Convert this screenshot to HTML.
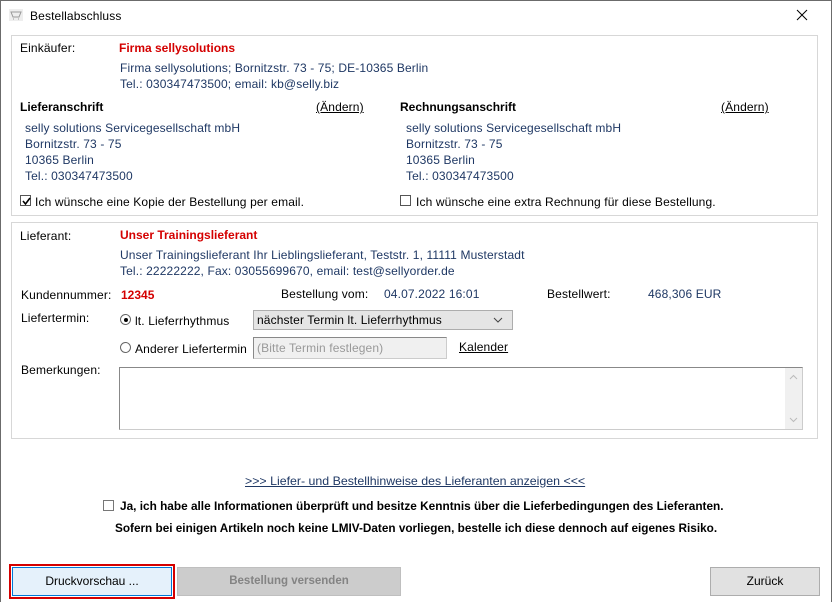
<!DOCTYPE html>
<html><head><meta charset="utf-8"><style>
*{margin:0;padding:0;box-sizing:border-box}
body{width:832px;height:602px;background:#fff;font-family:"Liberation Sans",Arial,sans-serif;font-size:12px;color:#000;position:relative;overflow:hidden;letter-spacing:.13px}
.win{position:absolute;left:0;top:0;width:832px;height:602px;border:1px solid #6b6b6b;border-bottom:none}
.a{position:absolute;white-space:nowrap}
.blue{color:#1f3864}
.red{color:#d40000;font-weight:bold;letter-spacing:0}
.b{font-weight:bold;letter-spacing:0}
.u{text-decoration:underline}
.panel{position:absolute;border:1px solid #d7d7d7;background:#fff}
.cb{position:absolute;width:11px;height:11px;border:1px solid #555;background:#fff}
.rb{position:absolute;width:11px;height:11px;border:1px solid #666;border-radius:50%;background:#fff}
.btn{position:absolute;height:28px;border:1px solid #adadad;background:#e1e1e1;text-align:center;line-height:26px;letter-spacing:0}
</style></head><body>
<div class="win"></div>
<svg class="a" style="left:9px;top:9px" width="14" height="12" viewBox="0 0 14 12"><rect x="0" y="0" width="14" height="12" fill="#eee"/><path d="M2 3h10l-2 5H4z M4 10h1 M9 10h1" stroke="#999" fill="none"/></svg>
<div class="a" style="left:30px;top:9px">Bestellabschluss</div>
<svg class="a" style="left:796px;top:9px" width="12" height="12"><path d="M1 1L11 11M11 1L1 11" stroke="#000" stroke-width="1"/></svg>

<div class="panel" style="left:11px;top:35px;width:807px;height:181px"></div>
<div class="a" style="left:20px;top:41px">Einkäufer:</div>
<div class="a red" style="left:119px;top:41px">Firma sellysolutions</div>
<div class="a blue" style="left:120px;top:61px">Firma sellysolutions; Bornitzstr. 73 - 75; DE-10365 Berlin</div>
<div class="a blue" style="left:120px;top:77px">Tel.: 030347473500; email: kb@selly.biz</div>
<div class="a b" style="left:20px;top:100px">Lieferanschrift</div>
<div class="a u" style="left:316px;top:100px">(Ändern)</div>
<div class="a blue" style="left:25px;top:120px;line-height:16px">selly solutions Servicegesellschaft mbH<br>Bornitzstr. 73 - 75<br>10365 Berlin<br>Tel.: 030347473500</div>
<div class="a b" style="left:400px;top:100px">Rechnungsanschrift</div>
<div class="a u" style="left:721px;top:100px">(Ändern)</div>
<div class="a blue" style="left:406px;top:120px;line-height:16px">selly solutions Servicegesellschaft mbH<br>Bornitzstr. 73 - 75<br>10365 Berlin<br>Tel.: 030347473500</div>
<div class="cb" style="left:20px;top:195px"></div>
<svg class="a" style="left:21px;top:196px" width="11" height="11"><path d="M2 5l2.5 3L9 2" stroke="#000" stroke-width="1.6" fill="none"/></svg>
<div class="a" style="left:35px;top:195px">Ich wünsche eine Kopie der Bestellung per email.</div>
<div class="cb" style="left:400px;top:195px"></div>
<div class="a" style="left:416px;top:195px">Ich wünsche eine extra Rechnung für diese Bestellung.</div>

<div class="panel" style="left:11px;top:222px;width:807px;height:217px"></div>
<div class="a" style="left:20px;top:229px">Lieferant:</div>
<div class="a red" style="left:120px;top:228px">Unser Trainingslieferant</div>
<div class="a blue" style="left:120px;top:248px">Unser Trainingslieferant Ihr Lieblingslieferant, Teststr. 1, 11111 Musterstadt</div>
<div class="a blue" style="left:120px;top:264px">Tel.: 22222222, Fax: 03055699670, email: test@sellyorder.de</div>
<div class="a" style="left:21px;top:288px">Kundennummer:</div>
<div class="a red" style="left:121px;top:288px">12345</div>
<div class="a" style="left:281px;top:287px">Bestellung vom:</div>
<div class="a blue" style="left:384px;top:287px">04.07.2022 16:01</div>
<div class="a" style="left:547px;top:287px">Bestellwert:</div>
<div class="a blue" style="left:648px;top:287px">468,306 EUR</div>
<div class="a" style="left:21px;top:311px">Liefertermin:</div>
<div class="rb" style="left:120px;top:314px"></div><div class="a" style="left:124px;top:318px;width:4px;height:4px;background:#000;border-radius:50%"></div>
<div class="a" style="left:135px;top:314px">lt. Lieferrhythmus</div>
<div class="a" style="left:253px;top:310px;width:260px;height:20px;border:1px solid #adadad;background:#e5e5e5;padding:2px 0 0 3px">nächster Termin lt. Lieferrhythmus</div>
<svg class="a" style="left:493px;top:317px" width="10" height="7"><path d="M1 1l4 4 4-4" stroke="#444" fill="none"/></svg>
<div class="rb" style="left:120px;top:342px"></div>
<div class="a" style="left:135px;top:342px">Anderer Liefertermin</div>
<div class="a" style="left:253px;top:337px;width:194px;height:22px;border:1px solid #ccc;border-top-color:#888;border-left-color:#888;background:#f0f0f0;color:#999;padding:3px 0 0 3px">(Bitte Termin festlegen)</div>
<div class="a u" style="left:459px;top:340px">Kalender</div>
<div class="a" style="left:21px;top:363px">Bemerkungen:</div>
<div class="a" style="left:119px;top:367px;width:684px;height:63px;border:1px solid #ccc;border-top:1px solid #888;border-left:1px solid #888"></div>
<div class="a" style="left:785px;top:368px;width:17px;height:61px;background:#f0f0f0"></div>
<svg class="a" style="left:789px;top:374px" width="9" height="50"><path d="M1 5l3.5-3.5L8 5M1 44l3.5 3.5L8 44" stroke="#bbb" fill="none"/></svg>

<div class="a u blue" style="left:245px;top:474px;letter-spacing:0;transform:scaleX(1.03);transform-origin:left">&gt;&gt;&gt; Liefer- und Bestellhinweise des Lieferanten anzeigen &lt;&lt;&lt;</div>
<div class="cb" style="left:103px;top:500px;border-color:#777"></div>
<div class="a b" style="left:120px;top:499px;transform:scaleX(.985);transform-origin:left">Ja, ich habe alle Informationen überprüft und besitze Kenntnis über die Lieferbedingungen des Lieferanten.</div>
<div class="a b" style="left:115px;top:521px;transform:scaleX(.98);transform-origin:left">Sofern bei einigen Artikeln noch keine LMIV-Daten vorliegen, bestelle ich diese dennoch auf eigenes Risiko.</div>

<div class="a" style="left:9px;top:564px;width:166px;height:35px;border:2px solid #d40000"></div>
<div class="btn" style="left:12px;top:567px;width:160px;height:29px;border-color:#0078d7;background:#e5f1fb;line-height:27px">Druckvorschau ...</div>
<div class="btn" style="left:177px;top:567px;width:224px;height:29px;border-color:#bfbfbf;background:#cccccc;color:#838383;line-height:27px;font-weight:bold;font-size:11.5px">Bestellung versenden</div>
<div class="btn" style="left:710px;top:567px;width:110px;height:29px;line-height:27px">Zurück</div>
</body></html>
